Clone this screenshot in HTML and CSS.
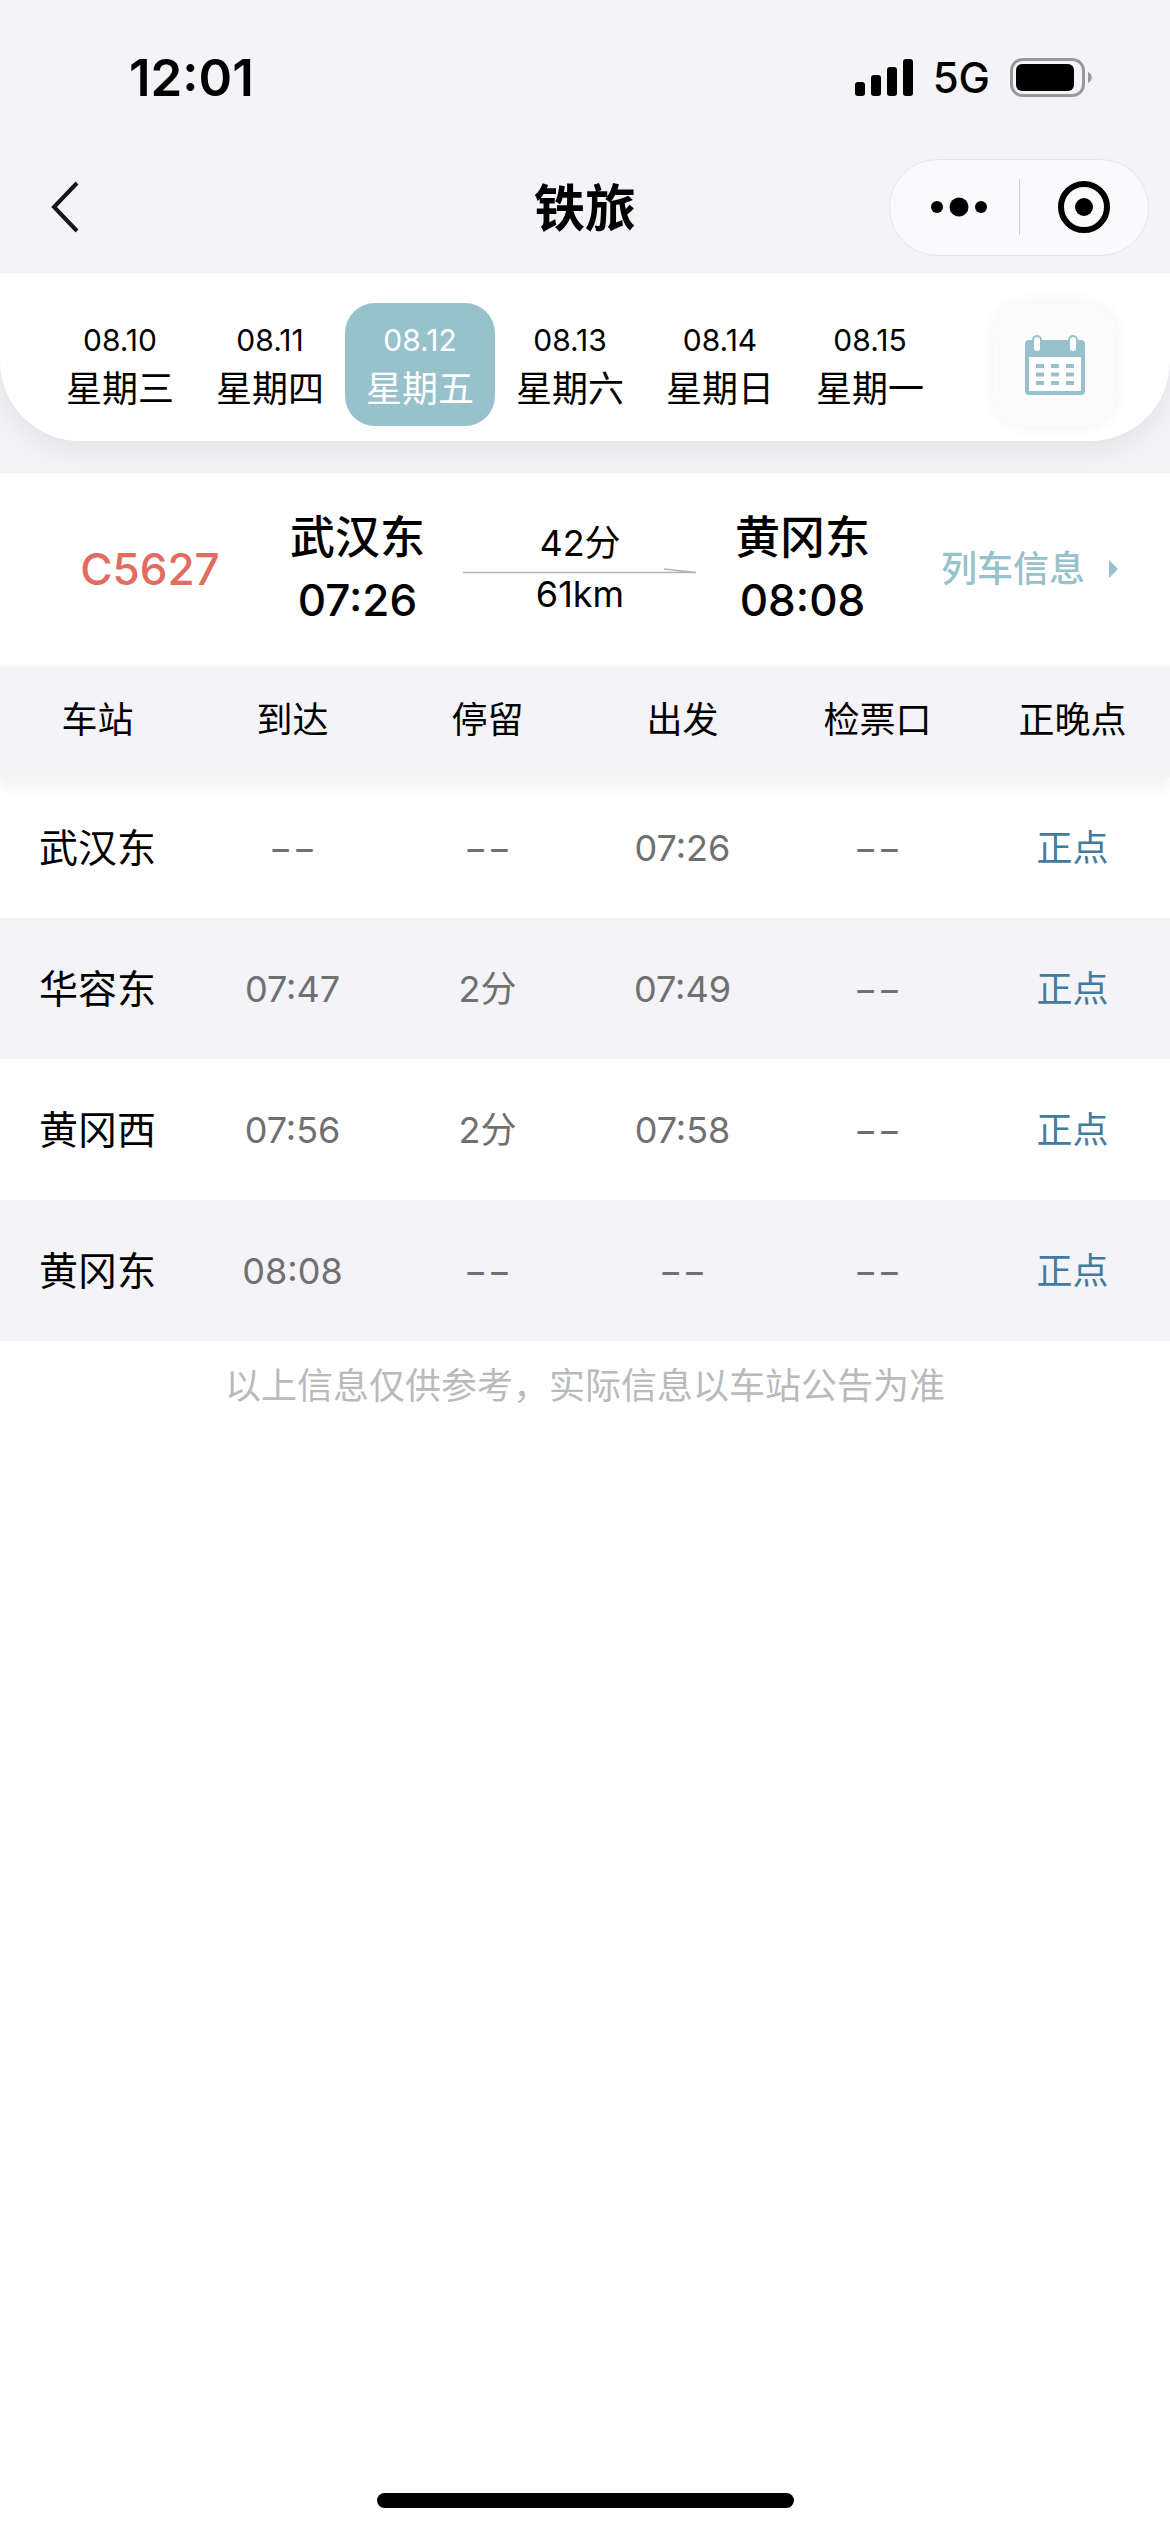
FILE: index.html
```html
<!DOCTYPE html>
<html lang="zh-CN">
<head>
    <meta charset="UTF-8">
    <meta name="viewport" content="width=device-width, initial-scale=1.0">
    <title>铁旅</title>
    <link rel="stylesheet" href="styles.css">
</head>
<body>
    <header>
        <div class="status-bar">
            <span class="clock">12:01</span>
            <div class="status-icons">
                <svg class="signal" viewBox="0 0 58 38" width="58" height="38">
                    <rect x="0" y="23" width="10" height="14" rx="3"/>
                    <rect x="16" y="16" width="10" height="21" rx="3"/>
                    <rect x="32" y="8" width="10" height="29" rx="3"/>
                    <rect x="48" y="0" width="10" height="37" rx="3"/>
                </svg>
                <span class="network">5G</span>
                <svg class="battery" viewBox="0 0 83 40" width="83" height="40">
                    <rect x="1.5" y="1.5" width="72" height="36" rx="11" fill="none" stroke="#98979c" stroke-width="3"/>
                    <rect x="6" y="6" width="58" height="27" rx="6"/>
                    <path d="M78 14c5 2 5 9 0 11z" fill="#98979c"/>
                </svg>
            </div>
        </div>
        <nav class="nav-bar">
            <button class="back-btn" aria-label="返回">
                <svg viewBox="0 0 30 52" width="30" height="52" fill="none" stroke="#16161a" stroke-width="4">
                    <path d="M27 2L4 26l23 24"/>
                </svg>
            </button>
            <h1>铁旅</h1>
            <div class="capsule">
                <button class="capsule-btn more" aria-label="更多">
                    <svg viewBox="0 0 58 20" width="58" height="20">
                        <circle cx="7" cy="10" r="6"/>
                        <circle cx="29" cy="10" r="9.5"/>
                        <circle cx="51" cy="10" r="6"/>
                    </svg>
                </button>
                <button class="capsule-btn close" aria-label="关闭">
                    <svg viewBox="0 0 52 52" width="52" height="52">
                        <circle cx="26" cy="26" r="23" fill="none" stroke="#000" stroke-width="6"/>
                        <circle cx="26" cy="26" r="9"/>
                    </svg>
                </button>
            </div>
        </nav>
    </header>

    <section class="date-wrap">
        <div class="date-bar">
            <div class="dates">
                <button class="date"><span>08.10</span><b>星期三</b></button>
                <button class="date"><span>08.11</span><b>星期四</b></button>
                <button class="date active"><span>08.12</span><b>星期五</b></button>
                <button class="date"><span>08.13</span><b>星期六</b></button>
                <button class="date"><span>08.14</span><b>星期日</b></button>
                <button class="date"><span>08.15</span><b>星期一</b></button>
            </div>
            <button class="calendar-btn" aria-label="选择日期">
                <svg viewBox="0 0 60 60" width="60" height="60">
                    <rect x="0" y="5" width="60" height="55" rx="4" fill="#97c2cb"/>
                    <rect x="4" y="22" width="52" height="34" fill="#fff"/>
                    <rect x="8" y="1" width="8" height="16" rx="4" fill="#fff" stroke="#97c2cb" stroke-width="2"/>
                    <rect x="44" y="1" width="8" height="16" rx="4" fill="#fff" stroke="#97c2cb" stroke-width="2"/>
                    <path d="M11 31h8M26 31h8M41 31h8M11 39.500h8M26 39.500h8M41 39.500h8M11 48h8M26 48h8M41 48h8" stroke="#97c2cb" stroke-width="4"/>
                </svg>
            </button>
        </div>
    </section>

    <section class="train">
        <div class="train-no">C5627</div>
        <div class="stop">
            <div>武汉东</div>
            <div class="time">07:26</div>
        </div>
        <div class="trip">
            <div>42分</div>
            <svg viewBox="0 0 234 6" width="234" height="6" fill="none" stroke="#b4b4b4">
                <path d="M0 4.500H233L201 1" stroke-width="1.500"/>
            </svg>
            <div class="distance">61km</div>
        </div>
        <div class="stop">
            <div>黄冈东</div>
            <div class="time">08:08</div>
        </div>
        <a class="train-info" href="#">列车信息
            <svg viewBox="0 0 10 18" width="10" height="18" fill="#97c2cb"><path d="M0 0l9 9-9 9z"/></svg>
        </a>
    </section>

    <table class="stations">
        <thead>
            <tr>
                <th>车站</th>
                <th>到达</th>
                <th>停留</th>
                <th>出发</th>
                <th>检票口</th>
                <th>正晚点</th>
            </tr>
        </thead>
        <tbody>
            <tr>
                <td class="name">武汉东</td>
                <td>−−</td>
                <td>−−</td>
                <td>07:26</td>
                <td>−−</td>
                <td class="on-time">正点</td>
            </tr>
            <tr>
                <td class="name">华容东</td>
                <td>07:47</td>
                <td>2分</td>
                <td>07:49</td>
                <td>−−</td>
                <td class="on-time">正点</td>
            </tr>
            <tr>
                <td class="name">黄冈西</td>
                <td>07:56</td>
                <td>2分</td>
                <td>07:58</td>
                <td>−−</td>
                <td class="on-time">正点</td>
            </tr>
            <tr>
                <td class="name">黄冈东</td>
                <td>08:08</td>
                <td>−−</td>
                <td>−−</td>
                <td>−−</td>
                <td class="on-time">正点</td>
            </tr>
        </tbody>
    </table>
    <p class="note">以上信息仅供参考，实际信息以车站公告为准</p>

    <footer>
        <div class="home-bar"></div>
    </footer>
</body>
</html>
```
FILE: styles.css
```css
* {
    box-sizing: border-box;
}

body {
    margin: 0;
    min-height: 100vh;
    display: flex;
    flex-direction: column;
    background-color: #ffffff;
    color: #000000;
    font-family: Inter, "Noto Sans CJK SC", sans-serif;
    font-size: 36px;
    line-height: 54px;
}

button {
    padding: 0;
    border: none;
    background: none;
    color: inherit;
    font: inherit;
    cursor: pointer;
}

svg {
    display: block;
    flex-shrink: 0;
}

header {
    background-color: #f3f3f8;
}

/* status bar */
.status-bar {
    height: 144px;
    padding: 12px 77px 0 129px;
    display: flex;
    align-items: center;
    justify-content: space-between;
}

.clock {
    font-size: 51px;
    font-weight: 600;
}

.status-icons {
    display: flex;
    align-items: center;
    gap: 20px;
}

.network {
    font-size: 42px;
    font-weight: 500;
}

/* nav bar */
.nav-bar {
    height: 129px;
    padding: 0 21px 3px 50px;
    display: grid;
    grid-template-columns: 1fr auto 1fr;
    align-items: center;
}

.back-btn {
    justify-self: start;
}

.nav-bar h1 {
    margin: 0;
    padding: 4px 29px 0 0;
    font-size: 51px;
    line-height: 72px;
    font-weight: 700;
}

.capsule {
    justify-self: end;
    width: 260px;
    height: 97px;
    display: grid;
    grid-template-columns: 1fr 1fr;
    align-items: center;
    background-color: #fafafd;
    border: 1px solid #e6e6ea;
    border-radius: 49px;
}

.capsule-btn {
    height: 56px;
    display: flex;
    align-items: center;
    justify-content: center;
}

.capsule-btn.more {
    padding-left: 8px;
}

.capsule-btn.close {
    border-left: 1px solid #cfcfd3;
}

/* dates */
.date-wrap {
    padding-bottom: 32px;
    background-color: #f3f3f8;
    overflow: hidden;
}

.date-bar {
    padding: 30px 54px 15px 45px;
    display: flex;
    align-items: flex-start;
    justify-content: space-between;
    background-color: #ffffff;
    border-radius: 0 0 80px 80px;
    box-shadow: 0 8px 30px rgba(0, 0, 0, 0.08);
}

.dates {
    display: flex;
}

.date {
    width: 150px;
    height: 123px;
    border-radius: 30px;
}

.date span,
.date b {
    display: block;
    font-weight: 400;
}

.date span {
    font-size: 30px;
    line-height: 48px;
}

.date b {
    line-height: 50px;
}

.date.active {
    background-color: #97c2cb;
    color: #ffffff;
}

.calendar-btn {
    width: 123px;
    height: 123px;
    display: flex;
    align-items: center;
    justify-content: center;
    background-color: #fbfbfb;
    border-radius: 30px;
    box-shadow: 0 0 15px rgba(0, 0, 0, 0.06);
}

/* train summary */
.train {
    height: 193px;
    padding: 0 15px 2px 45px;
    display: grid;
    grid-template-columns: 42fr 41fr 48fr 41fr 50fr;
    align-items: center;
    justify-items: center;
    text-align: center;
}

.train-no {
    color: #e16c60;
    font-size: 44px;
    font-weight: 500;
}

.stop {
    font-size: 45px;
    font-weight: 500;
    line-height: 63px;
}

.stop .time {
    font-size: 44px;
}

.trip {
    padding-bottom: 6px;
    line-height: 50px;
}

.trip .distance {
    line-height: 40px;
}

.train-info {
    display: flex;
    align-items: center;
    gap: 24px;
    color: #97c2cb;
    font-weight: 500;
    text-decoration: none;
}

/* stations */
.stations {
    width: 100%;
    table-layout: fixed;
    border-collapse: collapse;
    text-align: center;
}

.stations thead {
    background-color: #f3f3f8;
    box-shadow: 0 12px 10px #f5f5f6;
}

.stations th {
    height: 111px;
    padding: 0 0 4px;
    font-weight: 400;
}

.stations td {
    height: 141px;
    padding: 0;
    color: #707070;
}

.stations tbody tr:nth-child(even) {
    background-color: #f3f3f8;
}

.stations .name {
    color: #000000;
    font-size: 39px;
}

.stations .on-time {
    color: #417b9f;
}

.note {
    margin: 0;
    padding-top: 18px;
    color: #bababa;
    text-align: center;
}

footer {
    margin-top: auto;
    padding: 24px;
}

.home-bar {
    width: 417px;
    height: 15px;
    margin: 0 auto;
    background-color: #000000;
    border-radius: 8px;
}
```
